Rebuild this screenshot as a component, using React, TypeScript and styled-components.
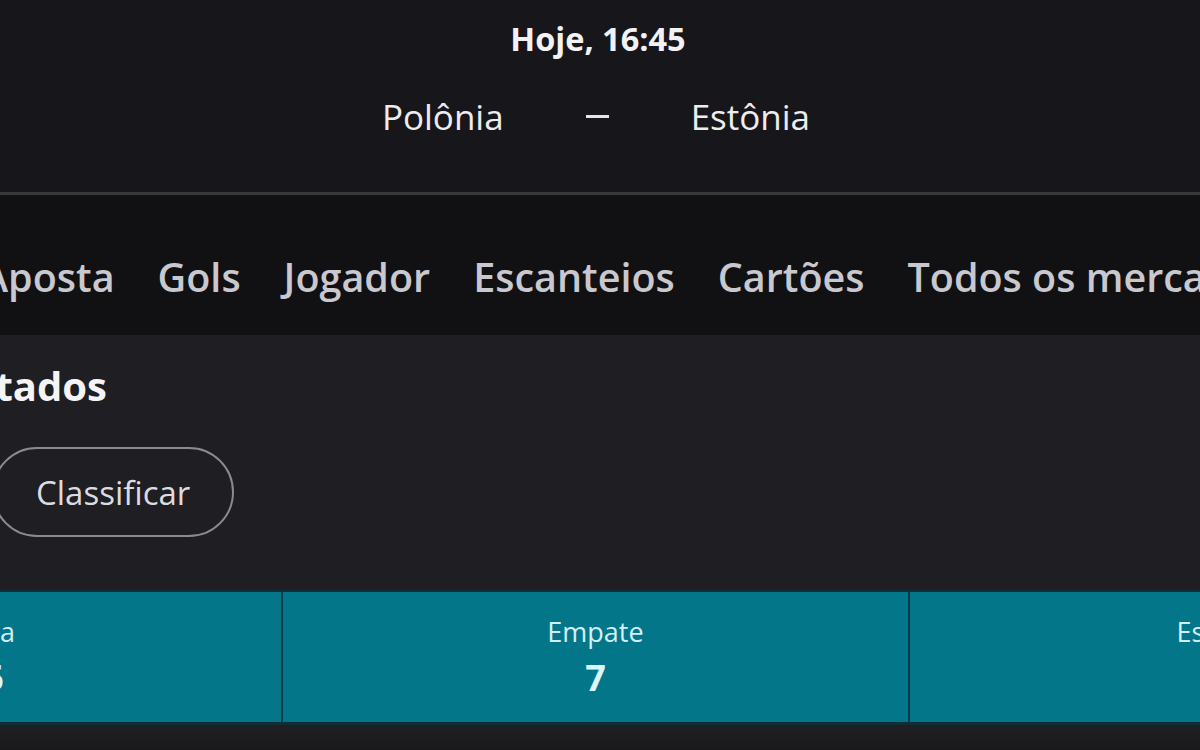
import React from "react";
import styled, { createGlobalStyle } from "styled-components";

const Global = createGlobalStyle`
  html, body { margin: 0; padding: 0; background: #1f1e22; }
  body { font-family: "Open Sans", "Noto Sans", Arial, sans-serif; }
  * { box-sizing: border-box; }
`;

const Viewport = styled.div`
  width: 1200px;
  height: 750px;
  overflow: hidden;
  background: #1f1e22;
  display: flex;
  flex-direction: column;
`;

const Header = styled.header`
  height: 195px;
  flex: none;
  background: #17161a;
  border-bottom: 3px solid #38373c;
  display: flex;
  flex-direction: column;
  align-items: center;
  padding: 23px 8px 0 0;
  gap: 43px;
`;

const Time = styled.div`
  font-size: 32.5px;
  line-height: 1;
  font-weight: 700;
  color: #f2f2f4;
  margin-right: -4px;
`;

const Teams = styled.div`
  display: flex;
  align-items: center;
  gap: 82px;
  font-size: 35px;
  line-height: 1;
  color: #ededf0;
`;

const Dash = styled.span`
  display: block;
  width: 23px;
  height: 3px;
  background: #e6e6ea;
`;

const TabBar = styled.nav`
  height: 140px;
  flex: none;
  background: #111114;
  display: flex;
  align-items: flex-start;
  gap: 43px;
  padding-top: 63px;
  margin-left: -18px;
  white-space: nowrap;
`;

const Tab = styled.span`
  font-size: 39.5px;
  line-height: 1;
  font-weight: 600;
  color: #c8c8ce;
`;

const Content = styled.section`
  flex: 1;
  display: flex;
  flex-direction: column;
  align-items: flex-start;
  padding-top: 31px;
  background: linear-gradient(#1f1e22 0, #1f1e22 392px, #19181b 415px);
`;

const Heading = styled.h2`
  margin: 0 0 41px -113px;
  font-size: 40px;
  line-height: 1;
  font-weight: 700;
  color: #f4f4f6;
`;

const SortButton = styled.button`
  height: 90px;
  margin-left: -8px;
  padding: 0 42px;
  border: 2px solid #8b8a8f;
  border-radius: 45px;
  background: transparent;
  font-family: inherit;
  font-size: 33px;
  color: #dcdce0;
  margin-bottom: 53px;
`;

const OddsRow = styled.div`
  display: grid;
  grid-template-columns: 626px 625px 625px;
  column-gap: 2px;
  margin-left: -345px;
  background: #0e3a46;
  border-top: 2px solid #12303a;
  border-bottom: 3px solid #0f2f38;
`;

const OddCell = styled.div`
  height: 130px;
  background: #04768a;
  display: flex;
  flex-direction: column;
  align-items: center;
  justify-content: center;
  gap: 15px;
`;

const OddLabel = styled.div`
  font-size: 27px;
  line-height: 1;
  color: #d2f1f6;
`;

const OddValue = styled.div`
  font-size: 36px;
  line-height: 1;
  font-weight: 700;
  color: #dcf6fa;
`;

const tabs = ["Aposta", "Gols", "Jogador", "Escanteios", "Cartões", "Todos os mercados"];
const odds = [
  { label: "Polônia", value: "1.45" },
  { label: "Empate", value: "7" },
  { label: "Estônia", value: "9" },
];

export default function App() {
  return (
    <>
      <Global />
      <Viewport>
        <Header>
          <Time>Hoje, 16:45</Time>
          <Teams>
            <span>Polônia</span>
            <Dash />
            <span>Estônia</span>
          </Teams>
        </Header>
        <TabBar>
          {tabs.map((t) => (
            <Tab key={t}>{t}</Tab>
          ))}
        </TabBar>
        <Content>
          <Heading>Resultados</Heading>
          <SortButton>Classificar</SortButton>
          <OddsRow>
            {odds.map((o) => (
              <OddCell key={o.label}>
                <OddLabel>{o.label}</OddLabel>
                <OddValue>{o.value}</OddValue>
              </OddCell>
            ))}
          </OddsRow>
        </Content>
      </Viewport>
    </>
  );
}
